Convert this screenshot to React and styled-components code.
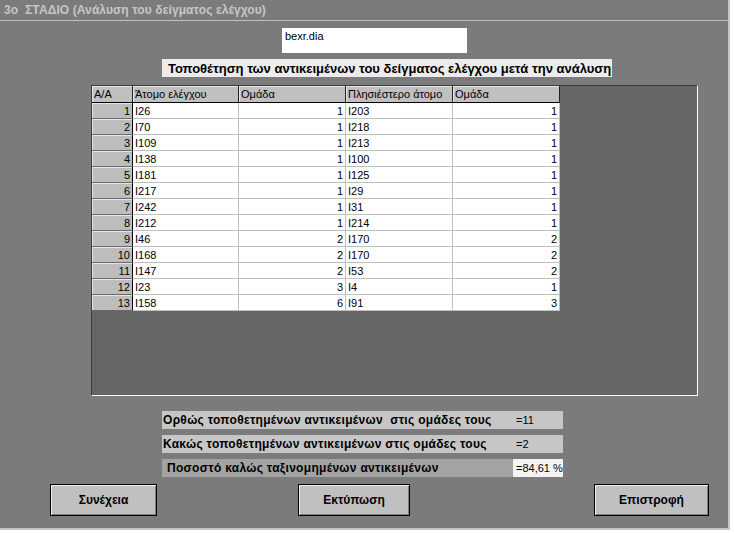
import React from "react";
import styled, { createGlobalStyle } from "styled-components";

const GlobalStyle = createGlobalStyle`
  html, body {
    margin: 0;
    padding: 0;
    background: #000;
  }
  body {
    font-family: "Liberation Sans", Arial, sans-serif;
    width: 734px;
    height: 533px;
    overflow: hidden;
  }
`;

const Screen = styled.div`
  width: 734px;
  height: 533px;
  display: flex;
  flex-direction: column;
  background: #fff;
`;

const Window = styled.div`
  width: 728px;
  height: 528px;
  background: #7b7b7b;
  border-right: 2px solid #c6c6c6;
  border-bottom: 2px solid #c6c6c6;
  display: flex;
  flex-direction: column;
`;

const TitleBar = styled.div`
  height: 20px;
  border-bottom: 1px solid #bdbdbd;
  display: flex;
  align-items: center;
  padding-left: 4px;
  color: #c6c6c6;
  font-size: 12px;
  font-weight: bold;
  letter-spacing: 0.1px;
`;

const Body = styled.div`
  flex: 1;
  display: flex;
  flex-direction: column;
  align-items: flex-start;
  padding-top: 7px;
`;

const FileBox = styled.div`
  margin-left: 282px;
  width: 182px;
  height: 23px;
  background: #fff;
  padding: 2px 0 0 3px;
  font-size: 11px;
  color: #000;
`;

const Heading = styled.div`
  margin: 6px 0 0 162px;
  width: 444px;
  height: 18px;
  padding-left: 6px;
  background: #ececec;
  display: flex;
  align-items: center;
  font-size: 13px;
  font-weight: bold;
  color: #000;
  white-space: nowrap;
`;

const GridBox = styled.div`
  margin: 8px 0 0 91px;
  width: 605px;
  height: 309px;
  background: #666;
  border: 1px solid;
  border-color: #3c3c3c #fff #fff #3c3c3c;
  display: flex;
  align-items: flex-start;
`;

const Table = styled.table`
  border-collapse: collapse;
  table-layout: fixed;
  width: 468px;
  font-size: 11px;
  color: #000;
  border-right: 1px solid #000;
  border-bottom: 1px solid #000;
`;

const Head = styled.th`
  width: ${(p) => p.$w - 3}px;
  height: 16px;
  padding: 0 0 0 2px;
  background: #c0c0c0;
  font-weight: normal;
  text-align: left;
  border-right: 1px solid #222;
  border-bottom: 1px solid #000;
  box-shadow: inset 1px 1px 0 #e6e6e6;
  white-space: nowrap;
  overflow: hidden;
`;

const RowNum = styled.td`
  height: 15px;
  padding: 0 2px 0 0;
  background: #bdbdbd;
  text-align: right;
  border-right: 1px solid #000;
  border-bottom: 1px solid #6a6a6a;
  box-shadow: inset 1px 1px 0 #e6e6e6;
`;

const Cell = styled.td`
  height: 15px;
  padding: ${(p) => (p.$num ? "0 2px 0 0" : "0 0 0 2px")};
  background: #fff;
  text-align: ${(p) => (p.$num ? "right" : "left")};
  border-right: 1px solid #c0c0c0;
  border-bottom: 1px solid #c0c0c0;
  white-space: nowrap;
  overflow: hidden;
`;

const Stats = styled.div`
  margin: 15px 0 0 162px;
  display: flex;
  flex-direction: column;
  gap: 6px;
`;

const StatRow = styled.div`
  width: 401px;
  height: 18px;
  display: flex;
  align-items: center;
  background: ${(p) => (p.$dark ? "#a3a3a3" : "#c6c6c6")};
  font-size: 12px;
  color: #000;
`;

const StatLabel = styled.div`
  flex: 1;
  padding-left: ${(p) => (p.$indent ? 5 : 1)}px;
  font-weight: bold;
  letter-spacing: 0.3px;
  white-space: pre;
`;

const StatValue = styled.div`
  width: 47px;
  height: 100%;
  padding-left: 3px;
  display: flex;
  align-items: center;
  font-size: 11px;
  background: ${(p) => (p.$white ? "#f4f4f4" : "transparent")};
`;

const Buttons = styled.div`
  margin-top: 7px;
  width: 100%;
  display: flex;
  align-items: center;
`;

const Button = styled.button`
  margin-left: ${(p) => p.$ml}px;
  width: ${(p) => p.$w}px;
  height: 32px;
  background: #c0c0c0;
  border: 1px solid #000;
  box-shadow: inset 1px 1px 0 #f0f0f0, inset -1px -1px 0 #808080;
  font-family: "Liberation Sans", Arial, sans-serif;
  font-size: 12px;
  font-weight: bold;
  color: #000;
  padding: 0;
  cursor: pointer;
`;

const rows = [
  ["I26", 1, "I203", 1],
  ["I70", 1, "I218", 1],
  ["I109", 1, "I213", 1],
  ["I138", 1, "I100", 1],
  ["I181", 1, "I125", 1],
  ["I217", 1, "I29", 1],
  ["I242", 1, "I31", 1],
  ["I212", 1, "I214", 1],
  ["I46", 2, "I170", 2],
  ["I168", 2, "I170", 2],
  ["I147", 2, "I53", 2],
  ["I23", 3, "I4", 1],
  ["I158", 6, "I91", 3],
];

export default function App() {
  return (
    <>
      <GlobalStyle />
      <Screen>
        <Window>
          <TitleBar>3o&nbsp;&nbsp;ΣΤΑΔΙΟ (Ανάλυση του δείγματος ελέγχου)</TitleBar>
          <Body>
            <FileBox>bexr.dia</FileBox>
            <Heading>
              Τοποθέτηση των αντικειμένων του δείγματος ελέγχου μετά την ανάλυση
            </Heading>
            <GridBox>
              <Table>
                <thead>
                  <tr>
                    <Head $w={41}>A/A</Head>
                    <Head $w={106}>Άτομο ελέγχου</Head>
                    <Head $w={107}>Ομάδα</Head>
                    <Head $w={107}>Πλησιέστερο άτομο</Head>
                    <Head $w={107}>Ομάδα</Head>
                  </tr>
                </thead>
                <tbody>
                  {rows.map((r, i) => (
                    <tr key={i}>
                      <RowNum>{i + 1}</RowNum>
                      <Cell>{r[0]}</Cell>
                      <Cell $num>{r[1]}</Cell>
                      <Cell>{r[2]}</Cell>
                      <Cell $num>{r[3]}</Cell>
                    </tr>
                  ))}
                </tbody>
              </Table>
            </GridBox>
            <Stats>
              <StatRow>
                <StatLabel>Ορθώς τοποθετημένων αντικειμένων  στις ομάδες τους</StatLabel>
                <StatValue>=11</StatValue>
              </StatRow>
              <StatRow>
                <StatLabel>Κακώς τοποθετημένων αντικειμένων στις ομάδες τους</StatLabel>
                <StatValue>=2</StatValue>
              </StatRow>
              <StatRow $dark>
                <StatLabel $indent>Ποσοστό καλώς ταξινομημένων αντικειμένων</StatLabel>
                <StatValue $white>=84,61 %</StatValue>
              </StatRow>
            </Stats>
            <Buttons>
              <Button $ml={50} $w={107}>Συνέχεια</Button>
              <Button $ml={141} $w={112}>Εκτύπωση</Button>
              <Button $ml={184} $w={115}>Επιστροφή</Button>
            </Buttons>
          </Body>
        </Window>
      </Screen>
    </>
  );
}
